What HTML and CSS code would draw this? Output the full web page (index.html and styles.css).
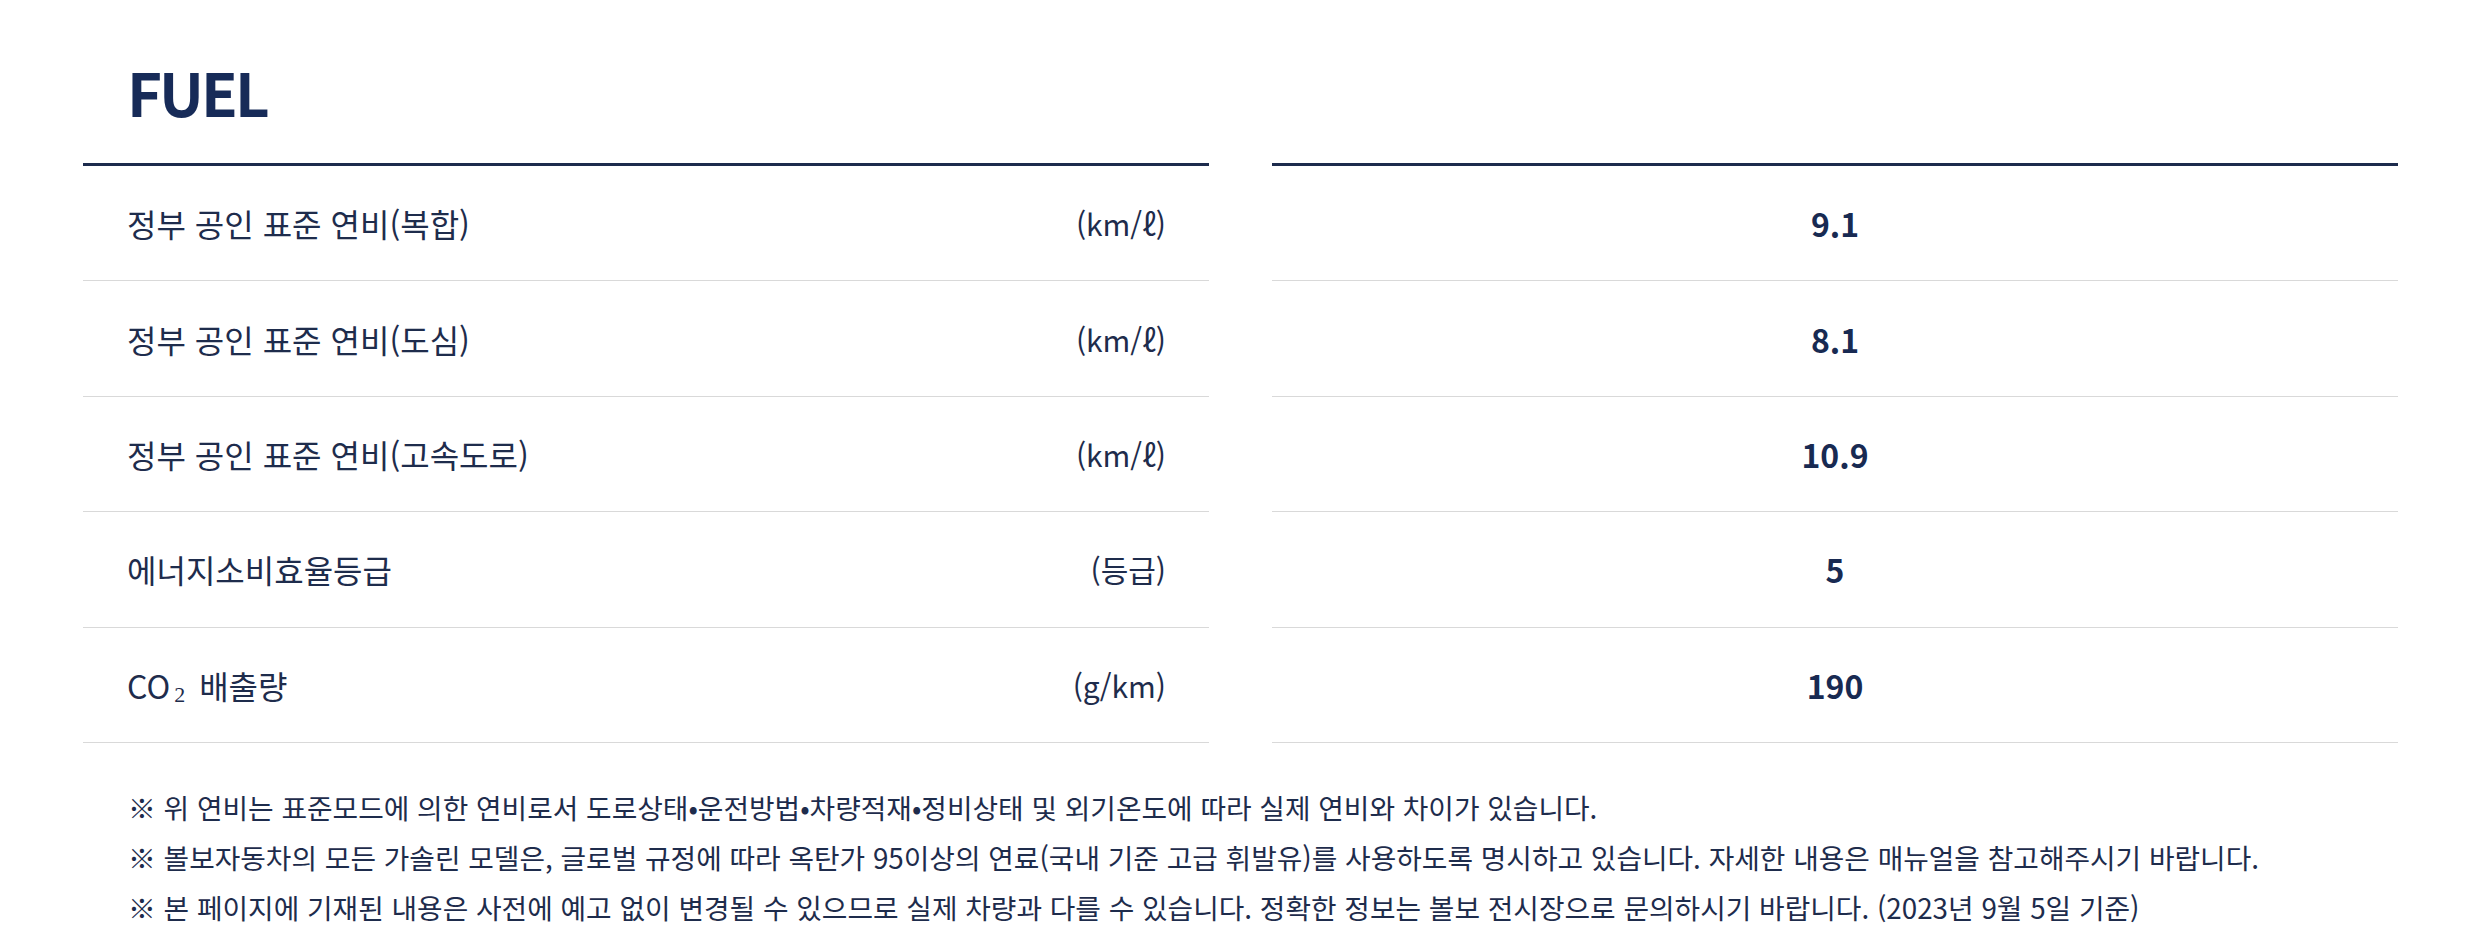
FILE: index.html
```html
<!DOCTYPE html>
<html lang="ko">
<head>
<meta charset="utf-8">
<title>FUEL</title>
<link rel="stylesheet" href="styles.css">
</head>
<body>
<section class="page">
  <h2 class="title">FUEL</h2>
  <div class="tables">
    <div class="table">
      <div class="row"><span class="label">정부 공인 표준 연비(복합)</span><span class="unit">(km/ℓ)</span></div>
      <div class="row"><span class="label">정부 공인 표준 연비(도심)</span><span class="unit">(km/ℓ)</span></div>
      <div class="row"><span class="label">정부 공인 표준 연비(고속도로)</span><span class="unit">(km/ℓ)</span></div>
      <div class="row"><span class="label">에너지소비효율등급</span><span class="unit">(등급)</span></div>
      <div class="row"><span class="label">CO<sub class="sub">2</sub>배출량</span><span class="unit">(g/km)</span></div>
    </div>
    <div class="table">
      <div class="row center"><span class="value">9.1</span></div>
      <div class="row center"><span class="value">8.1</span></div>
      <div class="row center"><span class="value">10.9</span></div>
      <div class="row center"><span class="value">5</span></div>
      <div class="row center"><span class="value">190</span></div>
    </div>
  </div>
  <ul class="notes">
    <li>※ 위 연비는 표준모드에 의한 연비로서 도로상태•운전방법•차량적재•정비상태 및 외기온도에 따라 실제 연비와 차이가 있습니다.</li>
    <li>※ 볼보자동차의 모든 가솔린 모델은, 글로벌 규정에 따라 옥탄가 95이상의 연료(국내 기준 고급 휘발유)를 사용하도록 명시하고 있습니다. 자세한 내용은 매뉴얼을 참고해주시기 바랍니다.</li>
    <li>※ 본 페이지에 기재된 내용은 사전에 예고 없이 변경될 수 있으므로 실제 차량과 다를 수 있습니다. 정확한 정보는 볼보 전시장으로 문의하시기 바랍니다. (2023년 9월 5일 기준)</li>
  </ul>
</section>
</body>
</html>
```

FILE: styles.css
```css
html, body {
  margin: 0;
  padding: 0;
  background: #ffffff;
}
body {
  font-family: "Noto Sans CJK KR", "Noto Sans", sans-serif;
  color: #1e2c4c;
}
.page {
  padding: 0 83px;
}
.title {
  margin: 0;
  height: 163px;
  box-sizing: border-box;
  padding: 51px 0 0 44px;
  font-size: 60px;
  line-height: 80px;
  font-weight: 700;
  letter-spacing: -3px;
  color: #172b58;
}
.tables {
  display: grid;
  grid-template-columns: 1fr 1fr;
  column-gap: 63px;
}
.table {
  border-top: 3px solid #1d2b4d;
}
.row {
  height: 115.4px;
  box-sizing: border-box;
  border-bottom: 1px solid #d9d9d9;
  display: flex;
  align-items: center;
  justify-content: space-between;
  padding: 0 43px 0 44px;
  font-size: 32px;
}
.row.center {
  justify-content: center;
  padding: 0;
}
.unit {
  font-size: 30px;
}
.sub {
  font-family: "Liberation Serif", serif;
  font-size: 22px;
  vertical-align: baseline;
  position: relative;
  top: 3px;
  margin: 0 14px 0 4px;
}
.value {
  font-weight: 700;
  color: #182a52;
}
.notes {
  list-style: none;
  margin: 0;
  padding: 39px 0 0 45px;
  font-size: 27.8px;
  line-height: 50px;
}
```
